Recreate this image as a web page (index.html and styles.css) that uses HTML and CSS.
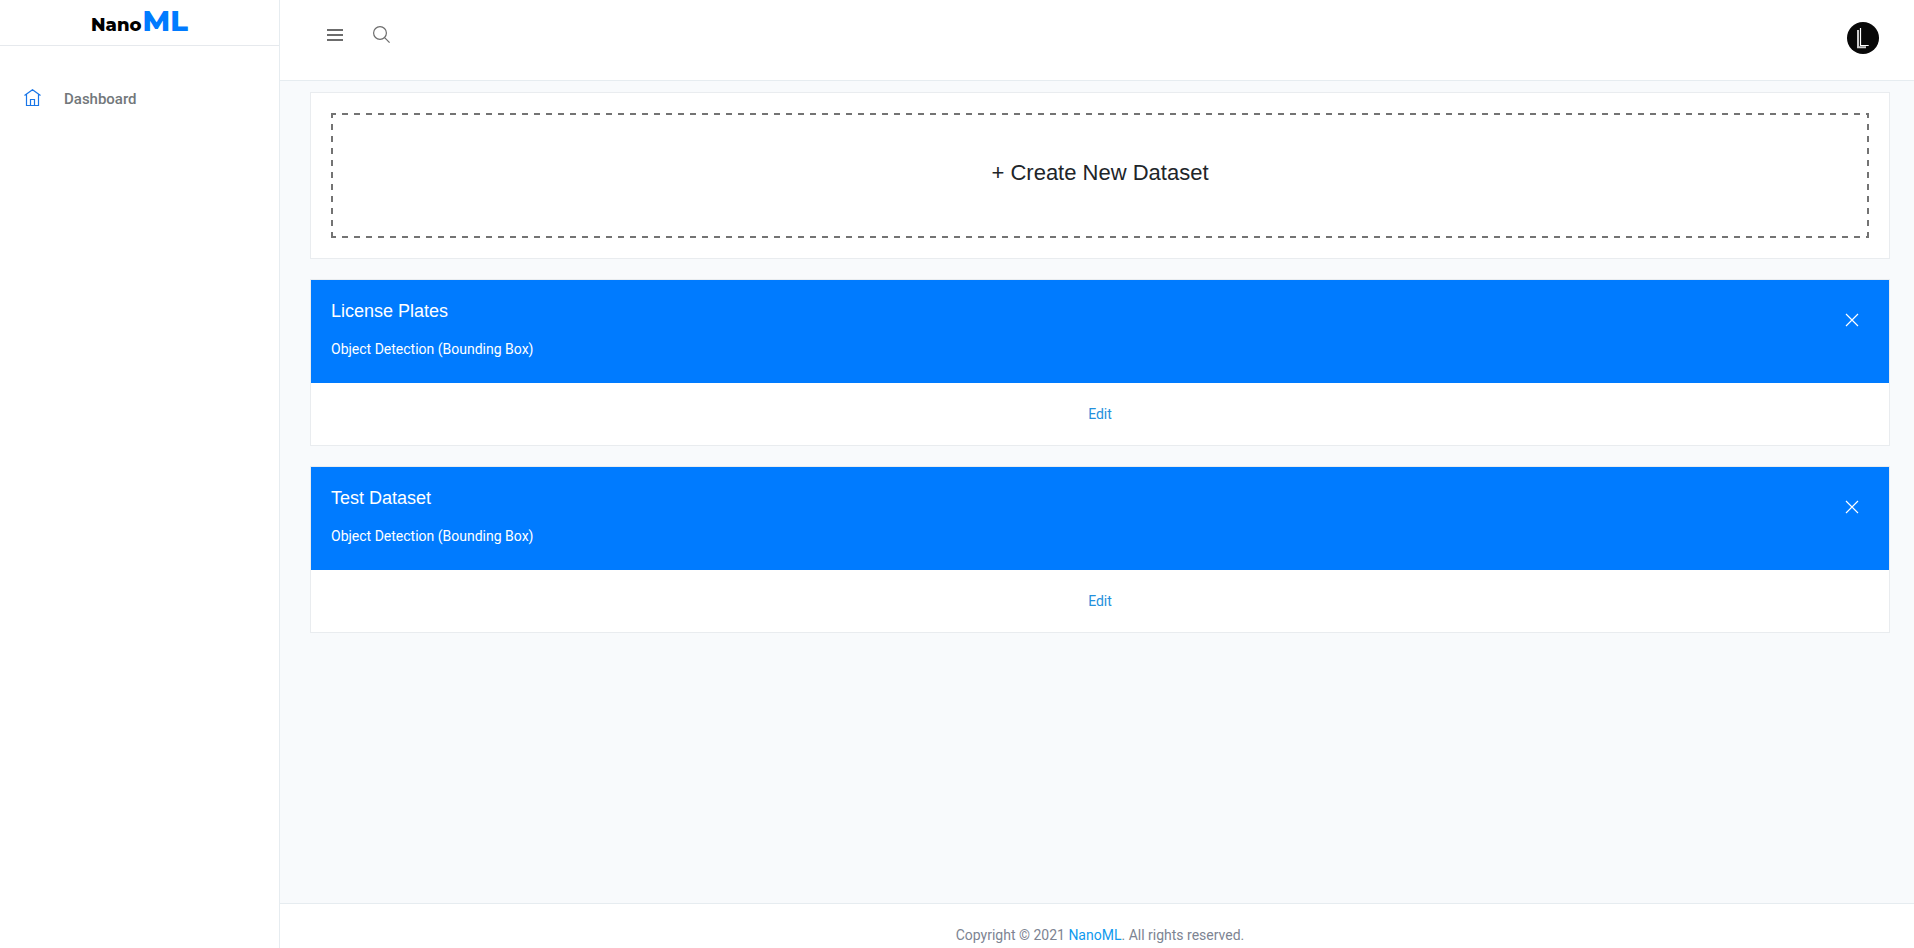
FILE: index.html
```html
<!DOCTYPE html>
<html lang="en">
<head>
<meta charset="utf-8">
<title>NanoML</title>
<link rel="stylesheet" href="styles.css">
</head>
<body>
<div class="app">
  <aside class="sidebar">
    <a class="logo" href="#"><span class="logo-nano">Nano</span><span class="logo-ml">ML</span></a>
    <nav class="menu">
      <a class="menu-item" href="#">
        <svg class="menu-icon" viewBox="0 0 17 17" aria-hidden="true"><path d="M0.5 6.5 8.5 0.7l8 5.8M2.5 5.5v11h12v-11M6.5 16.5v-6h4v6"/></svg>
        <span>Dashboard</span>
      </a>
    </nav>
  </aside>
  <div class="page">
    <header class="topbar">
      <div class="tools">
        <button class="icon-button" type="button" aria-label="Toggle menu">
          <svg class="icon-menu" viewBox="0 0 16 12" aria-hidden="true"><path d="M0 1h16M0 6h16M0 11h16"/></svg>
        </button>
        <button class="icon-button" type="button" aria-label="Search">
          <svg class="icon-search" viewBox="0 0 17 17" aria-hidden="true"><circle cx="7" cy="7" r="6.4"/><path d="m11.6 11.6 5 5"/></svg>
        </button>
      </div>
      <button class="avatar" type="button" aria-label="Account">
        <svg viewBox="0 0 32 32" aria-hidden="true"><circle cx="16" cy="16" r="16" fill="#080808"/><path d="M11 8v17.3h8" fill="none" stroke="#ccc" stroke-width="2"/><path d="M13.5 6v17.5h8.2" fill="none" stroke="#fff" stroke-width="1.2"/></svg>
      </button>
    </header>
    <main class="content">
      <section class="card create">
        <a class="create-link" href="#">+ Create New Dataset</a>
      </section>
      <article class="card">
        <header class="card-head">
          <div>
            <h2 class="card-title">License Plates</h2>
            <p class="card-type">Object Detection (Bounding Box)</p>
          </div>
          <button class="close" type="button" aria-label="Delete License Plates"><svg viewBox="0 0 14 14" aria-hidden="true"><path d="m1 1 12 12M13 1 1 13"/></svg></button>
        </header>
        <div class="card-foot"><a class="link" href="#">Edit</a></div>
      </article>
      <article class="card">
        <header class="card-head">
          <div>
            <h2 class="card-title">Test Dataset</h2>
            <p class="card-type">Object Detection (Bounding Box)</p>
          </div>
          <button class="close" type="button" aria-label="Delete Test Dataset"><svg viewBox="0 0 14 14" aria-hidden="true"><path d="m1 1 12 12M13 1 1 13"/></svg></button>
        </header>
        <div class="card-foot"><a class="link" href="#">Edit</a></div>
      </article>
    </main>
    <footer class="footer">Copyright © 2021 <a class="link-footer" href="#">NanoML</a>. All rights reserved.</footer>
  </div>
</div>
</body>
</html>
```
FILE: styles.css
```css
* { box-sizing: border-box; }
body {
  margin: 0;
  background: #f8fafc;
  color: #72777a;
  font: 14px/22px Roboto, sans-serif;
}
a { text-decoration: none; }
button { padding: 0; border: 0; background: none; cursor: pointer; }
svg { display: block; }

.app { display: flex; min-height: 100vh; }

.sidebar {
  flex: 0 0 280px;
  border-right: 1px solid #e6ecf0;
  background: #fff;
}
.logo {
  display: flex;
  justify-content: center;
  align-items: baseline;
  gap: 1px;
  height: 46px;
  border-bottom: 1px solid #e6e9ed;
  font-family: Montserrat, Inter, sans-serif;
  font-weight: 800;
  line-height: 42px;
}
.logo-nano { color: #000; font-size: 18px; }
.logo-ml { color: #007bff; font-size: 29px; }
.menu { padding: 40px 24px; }
.menu-item {
  display: flex;
  align-items: center;
  gap: 23px;
  color: #72777a;
  font-size: 15px;
  font-weight: 500;
  line-height: 26px;
}
.menu-icon {
  width: 17px;
  height: 17px;
  margin-bottom: 4px;
  fill: none;
  stroke: #1976e8;
  stroke-width: 1.2;
}

.page { flex: 1; display: flex; flex-direction: column; min-width: 0; }
.topbar {
  display: flex;
  justify-content: space-between;
  align-items: center;
  height: 81px;
  padding: 0 35px 5px 47px;
  border-bottom: 1px solid #e6ecf0;
  background: #fff;
}
.tools { display: flex; align-items: center; gap: 30px; padding-bottom: 6px; }
.icon-menu { width: 16px; height: 12px; stroke: #6c6c6c; stroke-width: 2; }
.icon-search { width: 17px; height: 17px; fill: none; stroke: #6c6c6c; stroke-width: 1.2; }
.avatar svg { width: 32px; height: 32px; }

.content {
  flex: 1;
  display: flex;
  flex-direction: column;
  gap: 20px;
  padding: 11px 24px 30px 30px;
}
.card { border: 1px solid #e9ecef; background: #fff; }
.create { padding: 20px; }
.create-link {
  --dash: #737373 0 5px, transparent 5px 11px, #737373 11px 12px;
  display: flex;
  justify-content: center;
  align-items: center;
  min-height: 125px;
  padding-bottom: 6px;
  background:
    repeating-linear-gradient(to right, var(--dash)) top / 100% 2px no-repeat,
    repeating-linear-gradient(to right, var(--dash)) bottom / 100% 2px no-repeat,
    repeating-linear-gradient(to bottom, var(--dash)) left / 2px 100% no-repeat,
    repeating-linear-gradient(to bottom, var(--dash)) right / 2px 100% no-repeat;
  color: #212529;
  font: 22px/32px "Liberation Sans", Arial, sans-serif;
}
.card-head {
  display: flex;
  justify-content: space-between;
  padding: 20px;
  background: #007bff;
  color: #fff;
}
.card-title {
  margin: 0 0 16px;
  font: 18px/22px "Liberation Sans", Arial, sans-serif;
}
.card-type { margin: 0 0 3px; }
.close { align-self: flex-start; padding: 13px 10px; }
.close svg { width: 14px; height: 14px; fill: none; stroke: #fff; stroke-width: 1.2; }
.card-foot { padding: 20px; text-align: center; }
.link { color: #2490dc; }
.link-footer { color: #0f9aee; }
.footer {
  padding: 20px 24px 2px 30px;
  border-top: 1px solid #e6ecf0;
  background: #fff;
  color: #7d8492;
  text-align: center;
}
```
